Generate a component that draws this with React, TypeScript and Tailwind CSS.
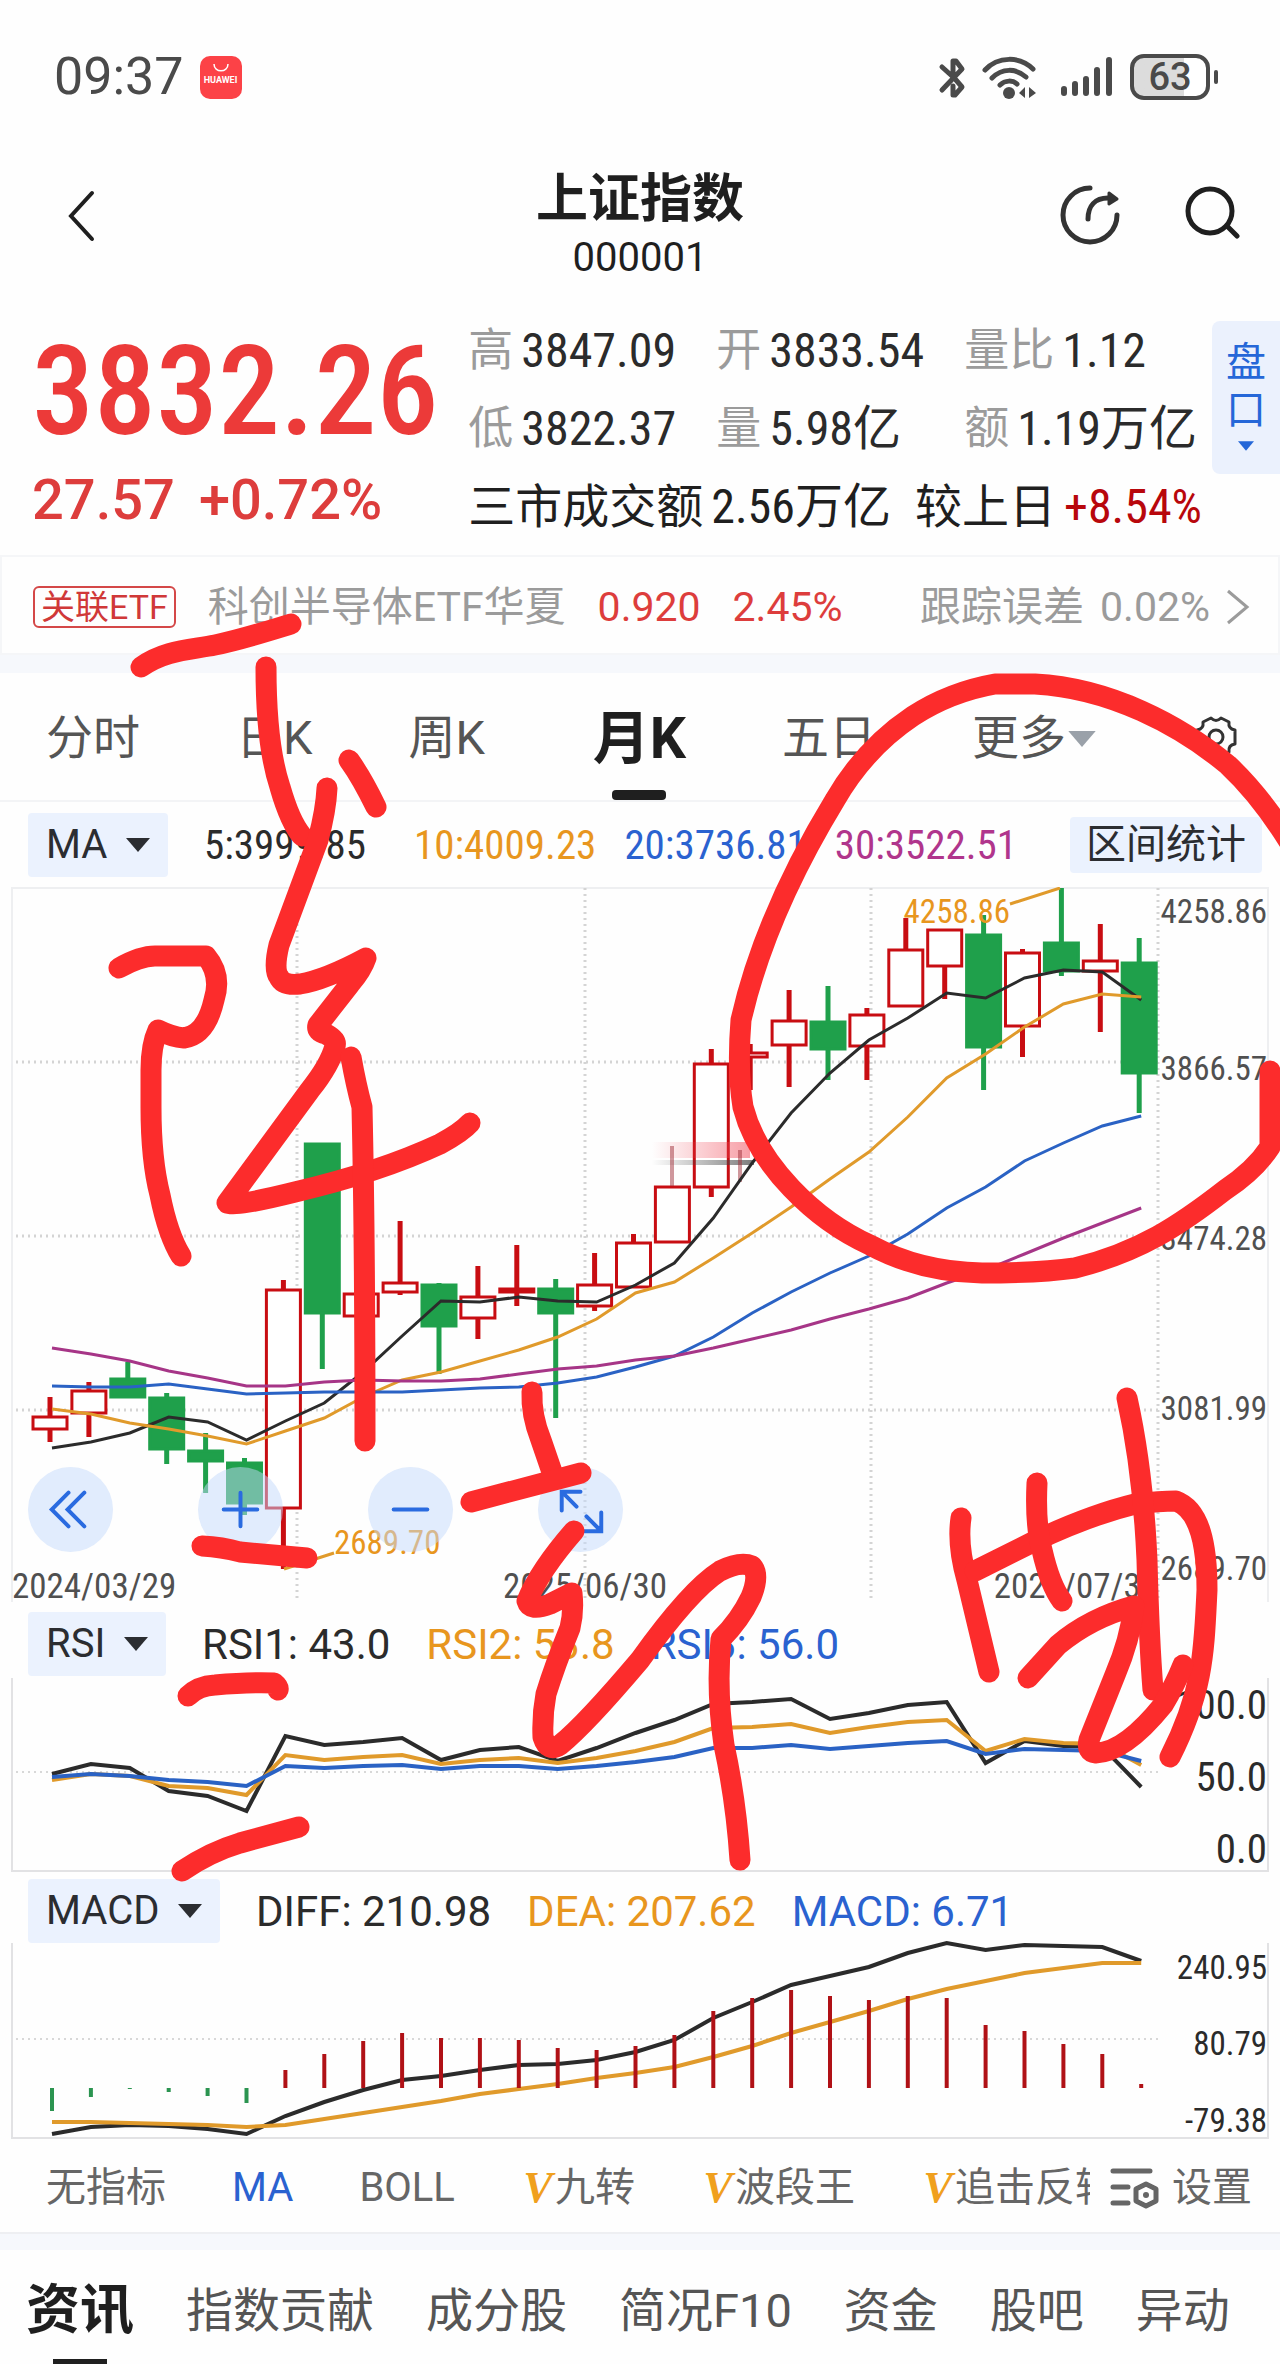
import { useState } from 'react'

type Candle = [number, number, number, number, boolean]

// high, body top, body bottom, low, rising
const candles: Candle[] = [
  [1397, 1416, 1430, 1442, true],
  [1382, 1390, 1414, 1437, true],
  [1362, 1378, 1398, 1398, false],
  [1393, 1397, 1450, 1464, false],
  [1433, 1450, 1462, 1493, false],
  [1458, 1462, 1504, 1515, false],
  [1280, 1289, 1509, 1569, true],
  [1143, 1143, 1314, 1369, false],
  [1293, 1293, 1317, 1317, true],
  [1221, 1282, 1293, 1295, true],
  [1283, 1284, 1327, 1374, false],
  [1266, 1296, 1319, 1339, true],
  [1245, 1288, 1293, 1306, true],
  [1279, 1288, 1314, 1418, false],
  [1253, 1284, 1307, 1311, true],
  [1234, 1242, 1288, 1288, true],
  [1186, 1186, 1243, 1243, true],
  [1049, 1063, 1188, 1197, true],
  [1044, 1052, 1058, 1090, true],
  [990, 1020, 1046, 1087, true],
  [986, 1021, 1050, 1080, false],
  [1008, 1014, 1047, 1080, true],
  [918, 949, 1007, 1007, true],
  [929, 929, 967, 999, true],
  [915, 934, 1048, 1090, false],
  [949, 952, 1027, 1057, true],
  [888, 942, 972, 976, false],
  [924, 960, 972, 1032, true],
  [938, 962, 1074, 1113, false],
]

const ma5 = [1448, 1442, 1433, 1417, 1422, 1440, 1421, 1403, 1372, 1336, 1301, 1302, 1297, 1301, 1302, 1285, 1263, 1218, 1163, 1113, 1073, 1040, 1018, 993, 998, 978, 970, 972, 1000]
const ma10 = [1409, 1414, 1423, 1429, 1436, 1444, 1431, 1418, 1397, 1380, 1372, 1361, 1350, 1337, 1319, 1293, 1282, 1258, 1233, 1207, 1179, 1152, 1117, 1078, 1054, 1027, 1004, 994, 997]
const ma20 = [1386, 1387, 1387, 1384, 1389, 1394, 1393, 1392, 1392, 1392, 1390, 1388, 1387, 1383, 1377, 1367, 1356, 1337, 1313, 1292, 1273, 1256, 1234, 1208, 1187, 1161, 1143, 1126, 1116]
const ma30 = [1348, 1354, 1361, 1371, 1378, 1386, 1386, 1382, 1380, 1381, 1381, 1379, 1374, 1369, 1366, 1360, 1356, 1348, 1339, 1330, 1319, 1309, 1298, 1283, 1270, 1254, 1238, 1223, 1208]

const rsi1 = [1774, 1764, 1768, 1791, 1796, 1811, 1736, 1745, 1742, 1738, 1760, 1750, 1747, 1761, 1748, 1733, 1720, 1704, 1702, 1699, 1719, 1713, 1705, 1702, 1763, 1741, 1746, 1747, 1787]
const rsi2 = [1780, 1774, 1776, 1786, 1788, 1795, 1755, 1760, 1757, 1755, 1764, 1760, 1758, 1763, 1758, 1751, 1742, 1728, 1727, 1724, 1733, 1727, 1722, 1720, 1751, 1739, 1743, 1744, 1765]
const rsi3 = [1777, 1774, 1776, 1780, 1782, 1786, 1766, 1768, 1766, 1765, 1769, 1766, 1766, 1769, 1766, 1762, 1757, 1748, 1748, 1745, 1749, 1746, 1743, 1741, 1754, 1749, 1750, 1751, 1761]

const bars = [2111, 2097, 2089, 2092, 2096, 2103, 2070, 2054, 2041, 2033, 2038, 2038, 2040, 2048, 2050, 2046, 2035, 2011, 1998, 1990, 1996, 2000, 1996, 1998, 2025, 2031, 2044, 2054, 2084]
const diff = [2134, 2127, 2125, 2126, 2129, 2134, 2116, 2102, 2090, 2080, 2076, 2070, 2065, 2064, 2060, 2052, 2040, 2018, 2002, 1985, 1976, 1967, 1953, 1943, 1950, 1945, 1946, 1947, 1961]
const dea = [2122, 2122, 2123, 2124, 2125, 2127, 2125, 2119, 2113, 2107, 2101, 2094, 2089, 2084, 2078, 2073, 2067, 2057, 2046, 2033, 2022, 2011, 1999, 1989, 1981, 1973, 1968, 1963, 1963]

const xAt = (i: number) => 50 + i * 38.9
const points = (ys: number[]) => ys.map((y, i) => `${xAt(i) + 2},${y}`).join(' ')

function Line({ ys, color, width = 3 }: { ys: number[]; color: string; width?: number }) {
  return <polyline points={points(ys)} fill="none" stroke={color} strokeWidth={width} />
}

function Triangle({ className }: { className: string }) {
  return (
    <svg viewBox="0 0 24 14" className={className} aria-hidden="true">
      <path d="M0 0H24L12 14Z" fill="currentColor" />
    </svg>
  )
}

function Chip({ name }: { name: string }) {
  return (
    <label className="flex h-16 items-center gap-[18px] rounded bg-[#ebf2fe] px-[18px] text-[#2b2d31]">
      <select aria-label={`${name} 指标`} className="appearance-none bg-transparent text-[40px] leading-none">
        <option>{name}</option>
      </select>
      <Triangle className="h-3.5 w-6" />
    </label>
  )
}

function StatusBar() {
  return (
    <div className="flex h-[154px] items-center justify-between pl-[54px] pr-[62px] text-[#4a4a4a]">
      <div className="flex items-center gap-4">
        <span className="text-[52px] leading-none">09:37</span>
        <div className="flex h-[43px] w-[42px] flex-col items-center gap-1 rounded-[10px] bg-[#fc4247] pt-2 text-white">
          <svg viewBox="0 0 16 8" className="h-2 w-4" fill="none" stroke="currentColor" strokeWidth="1.5">
            <path d="M1 0C1 9 15 9 15 0" />
          </svg>
          <span className="text-[9px] font-bold leading-none">HUAWEI</span>
        </div>
      </div>
      <div className="flex items-center">
        <svg viewBox="0 0 28 42" className="h-[42px] w-7" fill="none" stroke="currentColor" strokeWidth="5" strokeLinecap="round" strokeLinejoin="round">
          <path d="M4 11L14 20M4 34L24 13L18 5H15V20M18 24L24 31L17 39H15V30" />
        </svg>
        <svg viewBox="0 0 54 44" className="ml-4 h-11 w-[54px]" fill="none" stroke="currentColor" strokeWidth="5" strokeLinecap="round">
          <path d="M3 15C16 1 38 1 51 14M10 23C20 13 34 13 44 22M18 30C23 25 31 25 35 29" />
          <circle cx="27" cy="38" r="6" fill="currentColor" stroke="none" />
          <path d="M43 32V43L37 38ZM47 43V32L54 38Z" fill="currentColor" stroke="none" />
        </svg>
        <svg viewBox="0 0 54 42" className="ml-6 h-[42px] w-[54px]" stroke="currentColor" strokeWidth="6" strokeLinecap="round">
          <path d="M4 33V37M15 28V37M26 23V37M37 14V37M49 4V37" />
        </svg>
        <div className="ml-4 flex h-[46px] w-20 items-center justify-center rounded-[14px] border-4 border-current bg-linear-to-r from-[#dcdcdc] from-70% to-white to-70% text-[38px] font-medium leading-none">
          63
        </div>
        <div className="ml-1 h-3.5 w-1 rounded-full bg-current" />
      </div>
    </div>
  )
}

function Header() {
  return (
    <header className="flex h-[136px] items-start justify-between pl-16 pr-10 text-[#1f1f1f]">
      <button aria-label="返回" className="mt-9 w-40">
        <svg viewBox="0 0 34 52" className="h-[52px] w-[34px]" fill="none" stroke="currentColor" strokeWidth="4" strokeLinecap="round">
          <path d="M28 3L7 26L28 49" />
        </svg>
      </button>
      <div className="flex flex-col items-center">
        <h1 className="mt-[18px] text-[52px] font-bold leading-[56px]">上证指数</h1>
        <p className="mt-1 text-[40px] leading-[52px]">000001</p>
      </div>
      <div className="mt-7 flex gap-[60px]">
        <button aria-label="分享">
          <svg viewBox="0 0 64 66" className="h-[66px] w-16" fill="none" stroke="#333" strokeWidth="5" strokeLinecap="round">
            <path d="M34 6A27 27 0 1 0 61 33" />
            <path d="M32 37C32 24 39 16 52 16" />
            <path d="M53 11L61 17L53 22Z" fill="#333" strokeWidth="3" strokeLinejoin="round" />
          </svg>
        </button>
        <button aria-label="搜索">
          <svg viewBox="0 0 60 66" className="h-[66px] w-[60px]" fill="none" stroke="currentColor" strokeWidth="5" strokeLinecap="round">
            <circle cx="30" cy="29" r="22" />
            <path d="M47 44L57 54" />
          </svg>
        </button>
      </div>
    </header>
  )
}

function Stat({ label, value }: { label: string; value: string }) {
  return (
    <div className="flex items-center gap-2">
      <dt className="text-[#9b9b9b]">{label}</dt>
      <dd className="font-[Roboto_Condensed,Roboto,Noto_Sans_CJK_SC,sans-serif] text-[48px] text-[#2b2b2b]">{value}</dd>
    </div>
  )
}

function Quote() {
  return (
    <section className="flex h-[265px] justify-between">
      <div className="pl-8 pt-[46px] text-[#ec3a39]">
        <div className="font-[Roboto_Condensed,Roboto,sans-serif] text-[124px] font-medium leading-[112px]">3832.26</div>
        <div className="mt-4 flex gap-6 text-[56px] font-medium leading-[72px] text-[#dd3d3c]">
          <span>27.57</span>
          <span>+0.72%</span>
        </div>
      </div>
      <div className="flex">
        <div className="pt-[22px] text-[45px] leading-[78px]">
          <dl className="grid grid-cols-[248px_248px_auto]">
            <Stat label="高" value="3847.09" />
            <Stat label="开" value="3833.54" />
            <Stat label="量比" value="1.12" />
            <Stat label="低" value="3822.37" />
            <Stat label="量" value="5.98亿" />
            <Stat label="额" value="1.19万亿" />
          </dl>
          <p className="flex whitespace-nowrap font-[Roboto_Condensed,Roboto,Noto_Sans_CJK_SC,sans-serif] text-[47px] text-[#1f1f1f]">
            三市成交额<span className="ml-2 text-[48px]">2.56万亿</span>
            <span className="ml-6">较上日</span>
            <span className="ml-2 text-[48px] text-[#b8070c]">+8.54%</span>
          </p>
        </div>
        <button className="ml-2.5 mt-[31px] flex h-[153px] w-[68px] flex-col items-center rounded-l-lg bg-[#ebf1fd] pt-[18px] text-[40px] leading-[48px] text-[#2567d8]">
          <span>盘</span>
          <span>口</span>
          <Triangle className="mt-1.5 h-2.5 w-4" />
        </button>
      </div>
    </section>
  )
}

function EtfRow() {
  return (
    <a href="#etf" className="flex h-[100px] items-center justify-between border-2 border-[#f5f6f8] pl-[31px] pr-7 pt-1 text-[41px] leading-none text-[#9b9b9b]">
      <span className="flex items-center">
        <span className="rounded-md border-2 border-[#d44848] px-1.5 text-[34px] leading-[38px] text-[#d03838]">关联ETF</span>
        <span className="ml-8">科创半导体ETF华夏</span>
        <span className="ml-8 text-[#dd3d3c]">0.920</span>
        <span className="ml-8 text-[#dd3d3c]">2.45%</span>
      </span>
      <span className="flex items-center gap-4">
        <span>跟踪误差</span>
        <span>0.02%</span>
        <svg viewBox="0 0 24 36" className="h-9 w-6" fill="none" stroke="currentColor" strokeWidth="3">
          <path d="M2 2L21 18L2 34" />
        </svg>
      </span>
    </a>
  )
}

const periods = ['分时', '日K', '周K', '月K', '五日', '更多']

function PeriodTabs() {
  const [active, setActive] = useState('月K')

  return (
    <nav className="flex h-[129px] items-stretch justify-between border-b-2 border-[#f3f4f6] pl-[46px] pr-[42px] text-[47px] text-[#555]">
      {periods.map((p) => (
        <button key={p} onClick={() => setActive(p)} className={`relative flex items-center pt-1 ${p === active ? 'ml-3' : ''}`}>
          <span className={p === active ? 'text-[57px] font-bold text-[#1f1f1f]' : ''}>{p}</span>
          {p === '更多' && <Triangle className="h-4 w-8 text-[#9aa1a9]" />}
          {p === active && <span className="absolute bottom-0 left-1/2 h-2.5 w-[54px] -translate-x-1/2 rounded-sm bg-[#1f1f1f]" />}
        </button>
      ))}
      <button aria-label="图表设置">
        <svg viewBox="0 0 44 44" className="h-11 w-11" fill="none" stroke="#333" strokeWidth="3" strokeLinejoin="round">
          <path d="M17 3Q22 8 27 3L35 7Q34 14 41 15V29Q34 30 35 37L27 41Q22 36 17 41L9 37Q10 30 3 29V15Q10 14 9 7Z" />
          <circle cx="22" cy="22" r="7" />
        </svg>
      </button>
    </nav>
  )
}

function MainChart() {
  return (
    <section className="relative">
      <svg viewBox="0 887 1280 725" className="block w-full font-[Roboto_Condensed,Roboto,sans-serif] text-[33px]" role="img" aria-label="月K线">
        <defs>
          <linearGradient id="smear" x1="0" x2="1" y1="0" y2="0">
            <stop offset="0" stopColor="#f04050" stopOpacity="0" />
            <stop offset="1" stopColor="#f04050" stopOpacity="0.5" />
          </linearGradient>
          <linearGradient id="smearDark" x1="0" x2="1" y1="0" y2="0">
            <stop offset="0" stopColor="#444" stopOpacity="0" />
            <stop offset="1" stopColor="#444" stopOpacity="0.7" />
          </linearGradient>
        </defs>
        <path d="M12 1602V888H1268V1602" fill="none" stroke="#eeeff1" strokeWidth="2" />
        <path d="M297 888V1602M585 888V1602M871 888V1602M1158 888V1602" stroke="#d4d4d4" strokeWidth="3" strokeDasharray="2 4" />
        <path d="M16 1062H1158M16 1236H1158M16 1410H1158" stroke="#d4d4d4" strokeWidth="3" strokeDasharray="2 4" />

        {candles.map(([high, top, bottom, low, up], i) => (
          <g key={i} stroke={up ? '#c80d12' : '#1fa04b'}>
            <path d={`M${xAt(i)} ${high}V${top}M${xAt(i)} ${bottom}V${low}`} strokeWidth="5" />
            <rect x={xAt(i) - 17} y={top + 1} width="34" height={bottom - top - 2} strokeWidth="3" fill={up ? '#fff' : '#1fa04b'} />
          </g>
        ))}

        <rect x="652" y="1142" width="98" height="16" fill="url(#smear)" />
        <rect x="652" y="1160" width="102" height="5" fill="url(#smearDark)" />
        <path d="M672 1146V1186M740 1150V1182" stroke="#a0303a" strokeWidth="4" strokeOpacity="0.5" />

        <Line ys={ma5} color="#2b2b2b" />
        <Line ys={ma10} color="#e09a2b" />
        <Line ys={ma20} color="#2a62c4" />
        <Line ys={ma30} color="#a63587" />

        <path d="M1010 904L1060 888M284 1569L334 1553" stroke="#e09a2b" strokeWidth="3" />
        <g fill="#e8961e">
          <text x="1010" y="923" textAnchor="end">4258.86</text>
          <text x="334" y="1554">2689.70</text>
        </g>
        <g fill="#505050" textAnchor="end">
          <text x="1267" y="923">4258.86</text>
          <text x="1267" y="1080">3866.57</text>
          <text x="1267" y="1250">3474.28</text>
          <text x="1267" y="1420">3081.99</text>
          <text x="1267" y="1580">2689.70</text>
        </g>
        <g fill="#505050" className="text-[35px]">
          <text x="12" y="1598">2024/03/29</text>
          <text x="585" y="1598" textAnchor="middle">2025/06/30</text>
          <text x="1158" y="1598" textAnchor="end">2026/07/31</text>
        </g>
      </svg>

      <div className="absolute bottom-[60px] left-7 flex gap-[85px] text-[#2a6be0]">
        <RoundButton label="展开" d="M41 26L24 43L41 60M57 26L40 43L57 60" />
        <RoundButton label="放大" d="M43 26V60M26 43H60" />
        <RoundButton label="缩小" d="M26 43H60" />
        <RoundButton label="全屏" d="M24 44V25H43M25 26L39 40M64 46V65H45M63 64L49 50" />
      </div>
    </section>
  )
}

function RoundButton({ label, d }: { label: string; d: string }) {
  return (
    <button aria-label={label} className="h-[85px] w-[85px] rounded-full bg-[#c3d9fb]/50">
      <svg viewBox="0 0 86 86" className="h-full w-full" fill="none" stroke="currentColor" strokeWidth="4" strokeLinecap="round">
        <path d={d} />
      </svg>
    </button>
  )
}

function RsiChart() {
  return (
    <section>
      <div className="flex items-start gap-9 pl-7 text-[42px] leading-[66px]">
        <Chip name="RSI" />
        <span className="text-[#2b2b2b]">RSI1: 43.0</span>
        <span className="text-[#e8961e]">RSI2: 53.8</span>
        <span className="text-[#2a62d0]">RSI3: 56.0</span>
      </div>
      <svg viewBox="0 1678 1280 194" className="block w-full font-[Roboto_Condensed,Roboto,sans-serif] text-[41px]" role="img" aria-label="RSI">
        <path d="M12 1678V1871H1268V1678" fill="none" stroke="#e2e2e4" strokeWidth="2" />
        <path d="M16 1772H1158" stroke="#d8d8d8" strokeWidth="2" strokeDasharray="2 4" />
        <Line ys={rsi1} color="#2b2b2b" width={4} />
        <Line ys={rsi2} color="#e09a2b" width={4} />
        <Line ys={rsi3} color="#2a62c4" width={4} />
        <g fill="#2b2b2b" textAnchor="end">
          <text x="1267" y="1719">100.0</text>
          <text x="1267" y="1791">50.0</text>
          <text x="1267" y="1863">0.0</text>
        </g>
      </svg>
    </section>
  )
}

function MacdChart() {
  return (
    <section>
      <div className="flex h-[71px] items-start gap-9 pl-7 pt-[7px] text-[42px] leading-[66px]">
        <Chip name="MACD" />
        <span className="text-[#2b2b2b]">DIFF: 210.98</span>
        <span className="text-[#e8961e]">DEA: 207.62</span>
        <span className="text-[#2a62d0]">MACD: 6.71</span>
      </div>
      <svg viewBox="0 1943 1280 196" className="block w-full overflow-visible font-[Roboto_Condensed,Roboto,sans-serif] text-[33px]" role="img" aria-label="MACD">
        <path d="M12 1943V2138H1268V1943" fill="none" stroke="#e2e2e4" strokeWidth="2" />
        <path d="M16 2039H1158" stroke="#d8d8d8" strokeWidth="2" strokeDasharray="2 4" />
        <Line ys={diff} color="#2b2b2b" width={4} />
        <Line ys={dea} color="#e09a2b" width={4} />
        {bars.map((y, i) => (
          <path key={i} d={`M${xAt(i) + 2} 2088V${y}`} stroke={y > 2088 ? '#2b9450' : '#b01116'} strokeWidth="4" />
        ))}
        <g fill="#2b2b2b" textAnchor="end">
          <text x="1267" y="1979">240.95</text>
          <text x="1267" y="2055">80.79</text>
          <text x="1267" y="2132">-79.38</text>
        </g>
      </svg>
    </section>
  )
}

function VipLabel({ text }: { text: string }) {
  return (
    <button className="flex shrink-0 items-center">
      <span className="w-[34px] font-['Liberation_Serif',serif] text-[44px] font-bold italic text-[#f0a01e]">V</span>
      {text}
    </button>
  )
}

function IndicatorBar() {
  return (
    <div className="flex h-[93px] items-center pl-[46px] pr-7 pt-1 text-[40px] leading-none text-[#666]">
      <div className="flex flex-1 items-center gap-[66px] overflow-hidden whitespace-nowrap py-1">
        <button className="shrink-0">无指标</button>
        <button className="shrink-0 text-[#2a62d0]">MA</button>
        <button className="shrink-0">BOLL</button>
        <VipLabel text="九转" />
        <VipLabel text="波段王" />
        <VipLabel text="追击反转" />
      </div>
      <button className="ml-5 flex items-center gap-3">
        <svg viewBox="0 0 50 42" className="h-[42px] w-[50px]" fill="none" stroke="currentColor" strokeWidth="5" strokeLinecap="round" strokeLinejoin="round">
          <path d="M3 4H40M3 20H18M3 36H18M36 17L46 22V34L36 39L26 34V22Z" />
          <circle cx="36" cy="28" r="3" fill="currentColor" stroke="none" />
        </svg>
        设置
      </button>
    </div>
  )
}

const sections = ['指数贡献', '成分股', '简况F10', '资金', '股吧', '异动']

function BottomNav() {
  return (
    <nav className="flex h-[114px] gap-[52px] overflow-hidden whitespace-nowrap pl-[26px] text-[47px] leading-[122px] text-[#555]">
      <button className="relative text-[54px] font-bold text-[#1f1f1f]">
        资讯
        <span className="absolute bottom-0 left-1/2 h-[5px] w-[54px] -translate-x-1/2 bg-[#1f1f1f]" />
      </button>
      {sections.map((s) => (
        <button key={s}>{s}</button>
      ))}
    </nav>
  )
}

const strokes = [
  'M141 667C165 650 190 650 215 645S265 632 291 624',
  'M266 667Q266 745 280 787Q290 822 302 836',
  'M349 760Q362 778 376 807',
  'M327 788Q326 810 318 840L279 945Q273 970 279 977Q283 986 300 984Q325 980 366 958Q362 970 350 984L318 1025Q316 1032 326 1034Q337 1040 335 1046Q330 1065 310 1090L227 1203Q235 1207 295 1192Q380 1172 440 1144Q462 1132 470 1123',
  'M119 968Q140 956 155 956H206Q222 975 214 1000Q206 1035 184 1038Q172 1037 158 1030Q151 1045 151 1070V1107Q151 1160 160 1195Q168 1235 181 1256',
  'M351 1057Q356 1085 362 1107Q365 1240 365 1441',
  'M202 1546Q222 1547 240 1552L307 1558',
  'M532 1392Q531 1415 541 1440L552 1472',
  'M471 1502L581 1473',
  'M574 1531Q540 1570 527 1601Q530 1612 550 1604L572 1593Q574 1612 570 1628Q555 1665 546 1694Q542 1715 543 1737Q548 1753 560 1745Q585 1725 640 1660Q690 1590 720 1571Q740 1561 752 1566Q760 1575 751 1597Q740 1620 721 1639Q716 1690 724 1745Q736 1800 740 1860',
  'M188 1696Q198 1686 215 1685Q250 1682 274 1683Q279 1687 278 1690',
  'M182 1871Q210 1852 240 1843L299 1827',
  'M1288 840Q1260 795 1228 765C1180 725 1110 688 1035 684H995Q950 692 913 716Q865 748 835 800Q765 915 741 1020Q737 1070 743 1107C758 1165 815 1220 870 1245Q920 1272 982 1273Q1040 1273 1075 1268C1140 1252 1180 1225 1225 1190Q1255 1170 1270 1147V1071',
  'M961 1518Q957 1545 967 1580L989 1672',
  'M975 1571L1035 1541Q1090 1515 1135 1504Q1160 1501 1176 1501C1200 1510 1207 1545 1207 1590C1204 1650 1204 1690 1170 1757',
  'M1037 1483Q1035 1525 1042 1550Q1050 1585 1062 1601',
  'M1127 1398Q1143 1470 1147 1560Q1149 1640 1153 1690',
  'M1028 1678L1058 1645Q1090 1618 1134 1606Q1130 1640 1115 1675L1089 1740Q1086 1752 1096 1753Q1125 1752 1163 1705Q1175 1685 1183 1665',
]

// hand-drawn marks over the whole page
function Annotations() {
  return (
    <svg
      viewBox="0 0 1280 2364"
      preserveAspectRatio="none"
      className="pointer-events-none absolute inset-0 h-full w-full"
      fill="none"
      stroke="#fc2c2c"
      strokeWidth="21"
      strokeLinecap="round"
      strokeLinejoin="round"
      aria-hidden="true"
    >
      {strokes.map((d) => (
        <path key={d} d={d} />
      ))}
    </svg>
  )
}

export default function App() {
  return (
    <main className="relative overflow-hidden bg-[#fefefe] font-[Roboto,Noto_Sans_CJK_SC,sans-serif]">
      <StatusBar />
      <Header />
      <Quote />
      <EtfRow />
      <div className="h-[18px] bg-[#f6f8fc]" />
      <PeriodTabs />

      {/* Moving averages */}
      <div className="flex h-[85px] items-center justify-between pl-7 pr-[18px]">
        <div className="flex items-center gap-9 text-[40px] leading-none">
          <Chip name="MA" />
          <div className="flex gap-7 pt-0.5 font-[Roboto_Condensed,Roboto,sans-serif] text-[41px]">
            <span className="mr-5 text-[#2b2b2b]">5:3999.85</span>
            <span className="text-[#e8961e]">10:4009.23</span>
            <span className="text-[#2a62d0]">20:3736.81</span>
            <span className="text-[#b0358c]">30:3522.51</span>
          </div>
        </div>
        <button className="h-14 rounded bg-[#ebf2fe] px-4 text-[40px] leading-none text-[#2b2d31]">区间统计</button>
      </div>

      <MainChart />
      <RsiChart />
      <MacdChart />
      <IndicatorBar />
      <div className="h-[18px] border-t-2 border-[#eeeff2] bg-[#f6f8fc]" />
      <BottomNav />
      <Annotations />
    </main>
  )
}
